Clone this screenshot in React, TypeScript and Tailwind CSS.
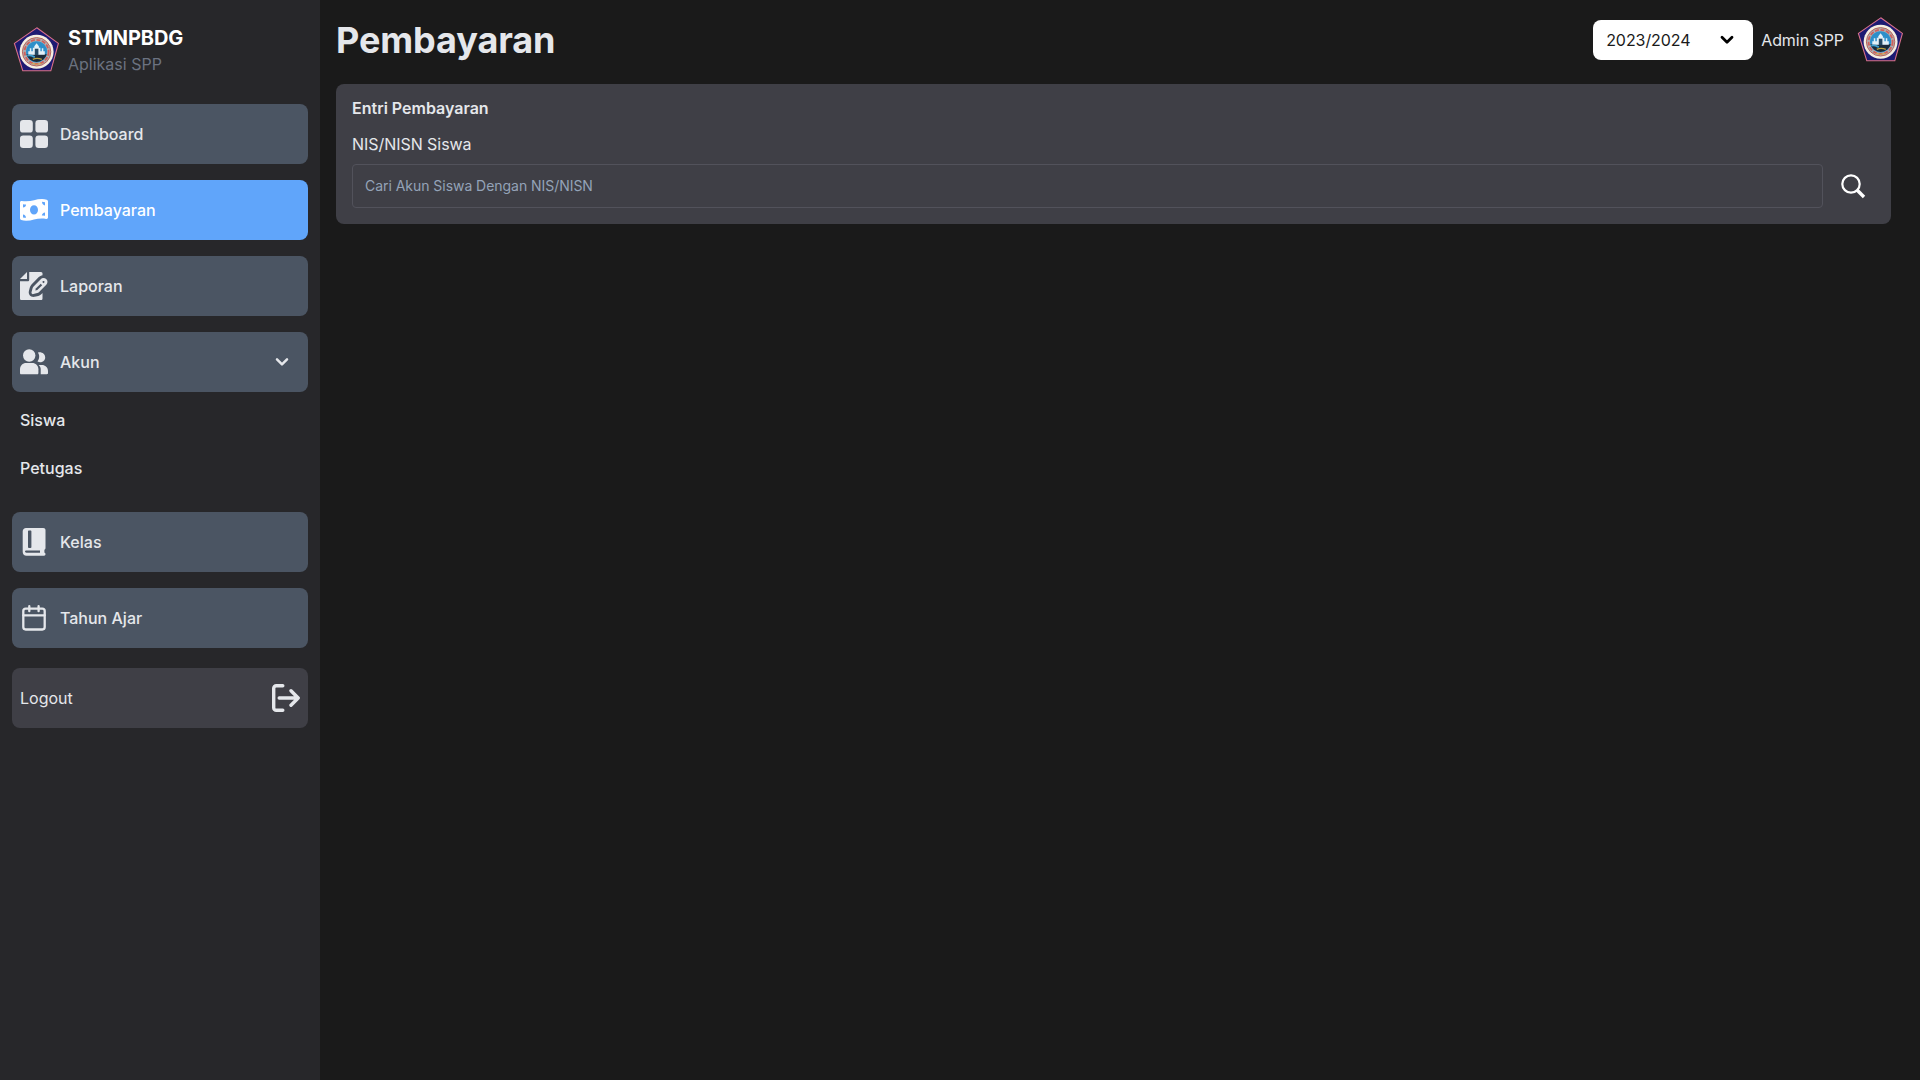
import React from 'react';

type IconProps = { className?: string };

function Emblem() {
  return (
    <svg className="size-12 shrink-0" viewBox="0.2 1.8 48 48" aria-hidden="true">
      <path d="M25 3.6 46.6 19.2 39 46.6H11L2.6 19.2Z" fill="#1d1a72" stroke="#d9708a" strokeWidth="1.1" />
      <circle cx="24.8" cy="27.6" r="17" fill="#f4eee2" />
      <circle cx="24.8" cy="27.6" r="14.2" fill="#aeb0b2" stroke="#b9635a" strokeWidth="1" />
      <circle cx="24.8" cy="27.6" r="12" fill="none" stroke="#d0605c" strokeWidth="1.8" strokeDasharray="4 1.6" />
      <circle cx="24.8" cy="27.6" r="10.6" fill="#2d8fca" />
      <path d="M14.600 30H35a10.600 10.600 0 0 1-20.400 0Z" fill="#1c2a38" />
      <path d="M16.500 27h1.500v-3h1.500v3h1.500v-3.500h1.500V22l2.300-3 2.300 3v1.500h1.500V27H30v-3h1.500v3H33v3.500H16.500Z" fill="#e3f0f7" />
      <path d="M23 24.500h3.600V31H23z" fill="#244761" />
      <path d="M15.500 31.500c3-1.200 5 .3 7.500 1.500" fill="none" stroke="#3f9fce" strokeWidth="1.8" />
      <path d="M21 35.200c3-1.600 6-1.400 9 0" fill="none" stroke="#b9a13f" strokeWidth="1.200" />
      <path d="M20 39.200q4.800 1.800 9.600 0" fill="none" stroke="#d7a74a" strokeWidth="1" />
    </svg>
  );
}

function GridIcon() {
  return (
    <svg className="size-7" viewBox="0 0 28 28" fill="currentColor">
      <rect width="12.800" height="12.600" rx="3.200" />
      <rect x="15.400" width="12.600" height="12.600" rx="3.200" />
      <rect y="15.400" width="12.800" height="12.600" rx="3.200" />
      <rect x="15.400" y="15.400" width="12.600" height="12.600" rx="3.200" />
    </svg>
  );
}

function MoneyIcon() {
  return (
    <svg className="size-7" viewBox="0 0 28 28" fill="currentColor" fillRule="evenodd">
      <path d="M0 6.6C0 5.4.8 4.8 1.8 5c8.700 1.500 13-2 20.200-2 1.800 0 3.300.3 4.700.7.8.3 1.300.9 1.300 1.700v15.800c0 1.200-.8 1.900-1.900 1.700-8.600-1.400-12.800 1.900-20 1.900-1.800 0-3.400-.3-4.800-.8-.8-.3-1.300-.9-1.300-1.700ZM14 9.200c-2.200 0-4 2.100-4 4.700s1.800 4.700 4 4.700 4-2.100 4-4.700-1.800-4.700-4-4.700ZM3 8.200v3.200c1.700 0 3-1.300 3.100-3Q4.500 8.400 3 8.200ZM3 18.400v3c.9.300 1.900.4 3 .4 0-1.900-1.300-3.400-3-3.400ZM25 9.400V6.200c-.9-.2-1.900-.4-3-.4 0 2 1.300 3.500 3 3.600ZM25 16.500c-1.700 0-3 1.400-3.200 3.100q1.700-.1 3.200.1Z" />
    </svg>
  );
}

function ReportIcon() {
  return (
    <svg className="size-7" viewBox="0 0 28 28" fill="currentColor">
      <path d="M0 7 7 0v7Z" />
      <path d="M9.200 0H21c1 0 1.500.8 1.500 1.600v1.600c-1.400.2-2.700.9-3.700 1.900l-7.300 7.300c-.8.8-1.400 1.900-1.700 3L8.900 19c-.9 3.600 2.200 6.700 5.800 5.800l3.600-.9c1.200-.3 2.200-.9 3-1.700l1.200-1.200v5.400c0 .9-.7 1.600-1.600 1.600H1.600C.7 28 0 27.300 0 26.400V9.300h7.600c.9 0 1.600-.7 1.600-1.600Z" />
      <path d="M20.500 7.400c1.600-1.700 4-1.800 5.700-.3 1.700 1.600 1.700 4.100.1 5.700l-7.200 7.200c-.5.500-1.200.9-1.900 1.100l-3.800 1c-1.200.3-2.200-.7-1.900-1.900l1-3.800c.2-.7.5-1.300 1.100-1.900Z" />
      <path d="m15.300 18.600.5-2 4.900-4.900 1.500 1.500-4.900 4.900Z" className="fill-[#4b5563]" />
      <path d="m22.200 9.900.9-.8c.4-.3.8-.3 1.200.1.400.4.4.9 0 1.300l-.7.800Z" className="fill-[#4b5563]" />
    </svg>
  );
}

function PeopleIcon() {
  return (
    <svg className="size-7" viewBox="0 0 28 28" fill="currentColor">
      <circle cx="9.200" cy="7.500" r="6.200" />
      <path d="M17.500 13.600a8.600 8.600 0 0 0 .5-9.200c4-.8 7.200 1.500 7.200 5.100 0 3.400-3.600 6-7.700 4.100Z" />
      <path d="M0 25v-3.800C0 17.700 2.700 15 6.200 15h6c3.400 0 6.200 2.700 6.200 6.200V25c0 1-.5 1.200-1.100 1.200H1.100C.5 26.200 0 26 0 25Z" />
      <path d="M18.700 17h3.200c3.300 0 6.100 2.400 6.100 6v2c0 .8-.5 1.200-1.200 1.200h-6.100v-5c0-1.600-.7-3.100-2-4.200Z" />
    </svg>
  );
}

function BookIcon() {
  return (
    <svg className="size-7" viewBox="0 0 28 28" fill="currentColor" fillRule="evenodd">
      <path d="M6 0h17.300c1.200 0 2.200.9 2.200 2v17.900c0 .8-.4 1.500-1.100 1.800v3.100c.7 0 1.100.6 1.100 1.300 0 .9-.6 1.700-1.400 1.700H6.500A4 4 0 0 1 2.700 24V3.300C2.700 1.500 4.200 0 6 0Zm3 2.400c-.6 0-1 .4-1 1v15.800c0 .5.4.8 1 .8h1.500c.5 0 .9-.3.900-.8V3.400c0-.6-.4-1-.9-1ZM6.500 22.400c-.9 0-1.500.5-1.500 1.200s.6 1.200 1.500 1.200H20v-2.400Z" />
    </svg>
  );
}

function CalendarIcon() {
  return (
    <svg className="size-7" viewBox="0 0 28 28" fill="none" stroke="currentColor" strokeWidth="2.300" strokeLinecap="round">
      <rect x="3.300" y="4.600" width="21.400" height="20.900" rx="2.400" />
      <path d="M3.300 11.300h21.400M9.300 2.200v5M18.600 2.200v5" />
    </svg>
  );
}

function LogoutIcon() {
  return (
    <svg className="size-7" viewBox="0 0 28 28" fill="none" stroke="currentColor" strokeWidth="3.400" strokeLinecap="round" strokeLinejoin="round">
      <path d="M10.800 1.700H4.300A2.600 2.600 0 0 0 1.700 4.300v19.400a2.600 2.600 0 0 0 2.600 2.600h6.500M7.200 14h18M19 6.800l7.200 7.200-7.200 7.200" />
    </svg>
  );
}

function Chevron({ className }: IconProps) {
  return (
    <svg className={className} width="14" height="14" viewBox="0 0 14 14" fill="none" stroke="currentColor" strokeLinecap="round" strokeLinejoin="round">
      <path d="m2 4.300 5 5 5-5" />
    </svg>
  );
}

type NavItemProps = { label: string; active?: boolean; icon: React.ReactNode; trailing?: React.ReactNode };

function NavItem({ label, active, icon, trailing }: NavItemProps) {
  return (
    <a className={`flex h-[60px] items-center rounded-lg px-2 font-medium ${active ? 'bg-[#60a5fa] text-white' : 'bg-[#4b5563] text-[#e5e7eb]'}`}>
      {icon}
      <span className="ml-3">{label}</span>
      {trailing}
    </a>
  );
}

function Sidebar() {
  return (
    <aside className="w-80 shrink-0 bg-[#27272a] px-3 pt-6">
      <div className="flex h-[52px] items-center">
        <Emblem />
        <div className="ml-2">
          <h1 className="text-xl leading-7 font-bold tracking-[-0.1px] text-white">STMNPBDG</h1>
          <p className="leading-6 text-[#6b7280]">Aplikasi SPP</p>
        </div>
      </div>
      <nav className="mt-7 flex flex-col gap-4">
        <NavItem label="Dashboard" icon={<GridIcon />} />
        <NavItem label="Pembayaran" active icon={<MoneyIcon />} />
        <NavItem label="Laporan" icon={<ReportIcon />} />
        <div>
          <NavItem label="Akun" icon={<PeopleIcon />} trailing={<Chevron className="mr-[11px] ml-auto stroke-[2.5]" />} />
          <ul className="flex flex-col gap-2 px-2 pt-2 font-medium text-[#e5e7eb]">
            <li className="flex h-10 items-center">Siswa</li>
            <li className="flex h-10 items-center">Petugas</li>
          </ul>
        </div>
        <div className="mt-2">
          <NavItem label="Kelas" icon={<BookIcon />} />
        </div>
        <NavItem label="Tahun Ajar" icon={<CalendarIcon />} />
      </nav>
      <button className="mt-5 flex h-[60px] w-full items-center justify-between rounded-lg bg-[#3f3f46] px-2 text-[#e5e7eb]">
        Logout
        <LogoutIcon />
      </button>
    </aside>
  );
}

export default function App() {
  return (
    <div className="flex h-screen overflow-hidden bg-[#1a1a1a] font-['Inter',sans-serif] text-base">
      <Sidebar />
      <main className="flex-1 pl-4">
        <header className="flex h-20 items-center pr-4">
          <h2 className="text-4xl font-bold tracking-[-0.1px] text-[#e5e7eb]">Pembayaran</h2>
          <div className="ml-auto flex items-center">
            <button className="flex h-10 w-40 items-center justify-between rounded-lg bg-white pr-[19px] pl-[13px] tracking-[-0.06px] text-[#1a1a1a]">
              2023/2024
              <Chevron className="stroke-[2.8] text-black" />
            </button>
            <span className="mr-3 ml-2 tracking-[-0.06px] text-[#e5e7eb]">Admin SPP</span>
            <Emblem />
          </div>
        </header>
        <section className="mt-1 mr-[29px] h-[140px] rounded-lg bg-[#3f3f46] px-4 pt-3 text-[#e5e7eb]">
          <h3 className="leading-6 font-semibold">Entri Pembayaran</h3>
          <label htmlFor="nis" className="mt-3 block leading-6 tracking-[-0.05px]">NIS/NISN Siswa</label>
          <div className="mt-2 flex items-center">
            <input
              id="nis"
              className="h-11 flex-1 rounded border border-[#52525b] bg-transparent px-3 pb-0.5 text-sm tracking-[-0.04px] placeholder:text-[#94a3b8]"
              placeholder="Cari Akun Siswa Dengan NIS/NISN"
            />
            <svg className="mr-[9px] mb-px ml-[17px] size-[26px] text-white" viewBox="0 0 26 26" fill="none" stroke="currentColor">
              <circle cx="11" cy="11" r="8.700" strokeWidth="2.200" />
              <path d="m16.800 16.800 7.200 7.200" strokeWidth="3.400" />
            </svg>
          </div>
        </section>
      </main>
    </div>
  );
}
